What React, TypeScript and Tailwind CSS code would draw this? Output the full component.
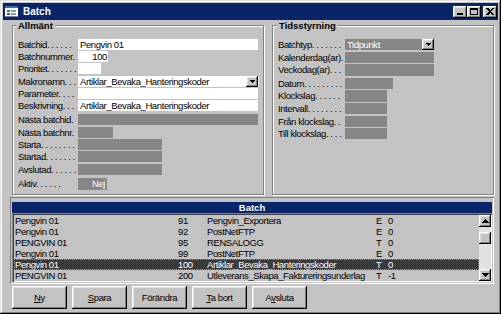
import React from "react";

const raised =
  "shadow-[inset_-1px_-1px_0_#000,inset_1px_1px_0_#fff,inset_-2px_-2px_0_#808080,inset_2px_2px_0_#dfdfdf]";

function Tri({ up = false }: { up?: boolean }) {
  return (
    <svg width="7" height="4" viewBox="0 0 7 4" shapeRendering="crispEdges" className="block">
      {up ? (
        <>
          <rect x="3" y="0" width="1" height="1" fill="#000" />
          <rect x="2" y="1" width="3" height="1" fill="#000" />
          <rect x="1" y="2" width="5" height="1" fill="#000" />
          <rect x="0" y="3" width="7" height="1" fill="#000" />
        </>
      ) : (
        <>
          <rect x="0" y="0" width="7" height="1" fill="#000" />
          <rect x="1" y="1" width="5" height="1" fill="#000" />
          <rect x="2" y="2" width="3" height="1" fill="#000" />
          <rect x="3" y="3" width="1" height="1" fill="#000" />
        </>
      )}
    </svg>
  );
}

function DropBtn() {
  return (
    <div className={`w-[12px] h-[11px] shrink-0 bg-[#c3c3c3] ${raised} flex items-center justify-center`}>
      <svg width="5" height="3" viewBox="0 0 5 3" shapeRendering="crispEdges" className="block">
        <rect x="0" y="0" width="5" height="1" fill="#000" />
        <rect x="1" y="1" width="3" height="1" fill="#000" />
        <rect x="2" y="2" width="1" height="1" fill="#000" />
      </svg>
    </div>
  );
}

function Row({ h, lw, label, children }: { h: string; lw: string; label: string; children?: React.ReactNode }) {
  return (
    <div className={`flex items-start ${h}`}>
      <div className={`${lw} h-[11px] whitespace-nowrap overflow-hidden shrink-0`}>{label}</div>
      {children}
    </div>
  );
}

function TitleBar() {
  return (
    <div className="h-[17px] bg-[#0a246a] flex items-center pl-[2px] pr-[1px] shrink-0">
      <svg width="13" height="11" viewBox="0 0 13 11" shapeRendering="crispEdges" className="block">
        <rect x="0" y="0" width="13" height="11" fill="#fff" />
        <rect x="0" y="0" width="13" height="2" fill="#3a6ea5" />
        <rect x="2" y="4" width="3" height="2" fill="#3a6ea5" />
        <rect x="6" y="4" width="5" height="2" fill="#7f9db9" />
        <rect x="2" y="7" width="3" height="2" fill="#3a6ea5" />
        <rect x="6" y="7" width="5" height="2" fill="#7f9db9" />
        <rect x="0" y="10" width="13" height="1" fill="#808080" />
      </svg>
      <span className="ml-[5px] text-white font-bold tracking-normal text-[10px] leading-[12px]">Batch</span>
      <div className="ml-auto flex items-center">
        <div className={`w-[14px] h-[12px] bg-[#c3c3c3] ${raised} relative`}>
          <div className="absolute left-[4px] top-[7px] w-[6px] h-[2px] bg-black" />
        </div>
        <div className={`w-[14px] h-[12px] bg-[#c3c3c3] ${raised} relative`}>
          <div className="absolute left-[3px] top-[2px] w-[8px] h-[7px] border border-black border-t-2" />
        </div>
        <div className={`ml-[2px] w-[14px] h-[12px] bg-[#c3c3c3] ${raised} flex items-center justify-center`}>
          <svg width="8" height="7" viewBox="0 0 8 7" shapeRendering="crispEdges" className="block">
            <path d="M0 0h2l2 2 2-2h2L5 3.5 8 7H6L4 5 2 7H0l3-3.5z" fill="#000" />
          </svg>
        </div>
      </div>
    </div>
  );
}

const ListRows = [
  ["Pengvin 01", "91", "Pengvin_Exportera", "E", "0"],
  ["Pengvin 01", "92", "PostNetFTP", "E", "0"],
  ["PENGVIN 01", "95", "RENSALOGG", "T", "0"],
  ["Pengvin 01", "99", "PostNetFTP", "E", "0"],
  ["Pengvin 01", "100", "Artiklar_Bevaka_Hanteringskoder", "T", "0"],
  ["PENGVIN 01", "200", "Utleverans_Skapa_Faktureringsunderlag", "T", "-1"],
];

export default function App() {
  const white = "bg-white h-[11px] px-[2px] whitespace-nowrap overflow-hidden";
  const gray = "bg-[#868686] h-[11px]";
  return (
    <div className="w-[501px] h-[314px] bg-[#c3c3c3] p-[3px] flex flex-col font-['Liberation_Sans',Arial,sans-serif] text-[9.5px] tracking-[-0.4px] leading-[11px] text-black shadow-[inset_-1px_-1px_0_#000,inset_1px_1px_0_#dfdfdf,inset_-2px_-2px_0_#808080,inset_2px_2px_0_#fff] overflow-hidden">
      <TitleBar />
      <div className="flex-1 flex flex-col pl-[7px]">
        <div className="flex mt-[5px] ml-[2px] gap-[8px]">
          {/* Allmänt */}
          <div className="relative w-[252px] h-[170px] border border-[#808080] shadow-[inset_1px_1px_0_#fff,1px_1px_0_#fff] pt-[13px] pl-[5px]">
            <div className="absolute -top-[6px] left-[3px] px-[2px] bg-[#c3c3c3] font-bold tracking-normal text-[9.5px] leading-[11px]">
              Allmänt
            </div>
            <Row h="h-[12px]" lw="w-[60px]" label="Batchid. . . . . .">
              <div className={`${white} w-[180px]`}>Pengvin 01</div>
            </Row>
            <Row h="h-[12px]" lw="w-[60px]" label="Batchnummer. .">
              <div className={`${white} w-[30px] text-right pr-[1px]`}>100</div>
            </Row>
            <Row h="h-[13px]" lw="w-[60px]" label="Prioritet. . . . . . .">
              <div className={`${white} w-[23px]`} />
            </Row>
            <Row h="h-[12px]" lw="w-[60px]" label="Makronamn. . .">
              <div className="bg-white h-[11px] w-[181px] flex items-center pl-[2px]">
                <span className="flex-1 whitespace-nowrap overflow-hidden">Artiklar_Bevaka_Hanteringskoder</span>
                <DropBtn />
                <div className="w-[1px]" />
              </div>
            </Row>
            <Row h="h-[12px]" lw="w-[60px]" label="Parameter. . . .">
              <div className={`${white} w-[180px]`} />
            </Row>
            <Row h="h-[14px]" lw="w-[60px]" label="Beskrivning. . .">
              <div className={`${white} w-[180px]`}>Artiklar_Bevaka_Hanteringskoder</div>
            </Row>
            <Row h="h-[13px]" lw="w-[60px]" label="Nästa batchid.">
              <div className={`${gray} w-[180px]`} />
            </Row>
            <Row h="h-[12px]" lw="w-[60px]" label="Nästa batchnr.">
              <div className={`${gray} w-[35px]`} />
            </Row>
            <Row h="h-[12px]" lw="w-[60px]" label="Starta. . . . . . . .">
              <div className={`${gray} w-[84px]`} />
            </Row>
            <Row h="h-[13px]" lw="w-[60px]" label="Startad. . . . . . .">
              <div className={`${gray} w-[84px]`} />
            </Row>
            <Row h="h-[14px]" lw="w-[60px]" label="Avslutad. . . . . .">
              <div className={`${gray} w-[84px]`} />
            </Row>
            <Row h="h-[12px]" lw="w-[60px]" label="Aktiv. . . . . .">
              <div className="bg-[#868686] h-[12px] w-[29px] text-white text-right pr-[2px] leading-[12px]">Nej</div>
            </Row>
          </div>

          {/* Tidsstyrning */}
          <div className="relative w-[222px] h-[170px] border border-[#808080] shadow-[inset_1px_1px_0_#fff,1px_1px_0_#fff] pt-[13px] pl-[5px]">
            <div className="absolute -top-[6px] left-[4px] px-[2px] bg-[#c3c3c3] font-bold tracking-normal text-[9.5px] leading-[11px]">
              Tidsstyrning
            </div>
            <Row h="h-[13px]" lw="w-[67px]" label="Batchtyp. . . . . . .">
              <div className="bg-[#868686] h-[11px] w-[89px] flex items-center pl-[2px] text-white">
                <span className="flex-1 whitespace-nowrap overflow-hidden">Tidpunkt</span>
                <DropBtn />
              </div>
            </Row>
            <Row h="h-[12px]" lw="w-[67px]" label="Kalenderdag(ar).">
              <div className={`${gray} w-[89px]`} />
            </Row>
            <Row h="h-[14px]" lw="w-[67px]" label="Veckodag(ar). . .">
              <div className={`${gray} w-[89px] h-[12px]`} />
            </Row>
            <Row h="h-[12px]" lw="w-[67px]" label="Datum. . . . . . . . .">
              <div className={`${gray} w-[48px]`} />
            </Row>
            <Row h="h-[13px]" lw="w-[67px]" label="Klockslag. . . . . .">
              <div className={`${gray} w-[42px] h-[12px]`} />
            </Row>
            <Row h="h-[13px]" lw="w-[67px]" label="Intervall. . . . . . . .">
              <div className={`${gray} w-[42px]`} />
            </Row>
            <Row h="h-[12px]" lw="w-[67px]" label="Från klockslag. .">
              <div className={`${gray} w-[42px]`} />
            </Row>
            <Row h="h-[12px]" lw="w-[67px]" label="Till klockslag. . . .">
              <div className={`${gray} w-[42px]`} />
            </Row>
          </div>
        </div>

        {/* List panel */}
        <div className="mt-[2px] w-[484px] h-[87px] shadow-[inset_1px_1px_0_#808080,inset_-1px_-1px_0_#fff] p-[2px] flex flex-col">
          <div className="mt-[3px] h-[11px] bg-[#0a246a] text-white font-bold tracking-normal text-center text-[9.5px] leading-[11px] shrink-0">
            Batch
          </div>
          <div className="flex-1 flex pt-[2px] pl-[2px] pb-[1px] shadow-[inset_1px_1px_0_#808080,inset_2px_2px_0_#404040,inset_-1px_-1px_0_#fff] overflow-hidden">
            <div className="flex-1 flex flex-col overflow-hidden">
              {ListRows.map((r, i) => (
                <div
                  key={i}
                  className={`flex h-[11px] shrink-0 whitespace-nowrap leading-[11px] ${
                    i === 4 ? "bg-[#3a3a3a] text-white outline outline-1 outline-dotted outline-[#9a9a9a] -outline-offset-1" : ""
                  }`}
                >
                  <div className="w-[164px] pl-[1px] shrink-0">{r[0]}</div>
                  <div className="w-[29px] shrink-0">{r[1]}</div>
                  <div className="w-[169px] shrink-0 overflow-hidden">{r[2]}</div>
                  <div className="w-[12px] shrink-0">{r[3]}</div>
                  <div className="flex-1">{r[4]}</div>
                </div>
              ))}
            </div>
            <div className="w-[12px] mr-[1px] flex flex-col bg-[#e2e2e2] shrink-0">
              <div className={`h-[12px] bg-[#c3c3c3] ${raised} flex items-center justify-center`}>
                <Tri up />
              </div>
              <div className={`mt-[5px] h-[12px] bg-[#c3c3c3] ${raised}`} />
              <div className="flex-1" />
              <div className={`h-[12px] bg-[#c3c3c3] ${raised} flex items-center justify-center`}>
                <Tri />
              </div>
            </div>
          </div>
        </div>

        {/* Buttons */}
        <div className="mt-[2px] ml-[2px] flex gap-[5px]">
          {[
            [<u key="u">N</u>, "y"],
            [<u key="u">S</u>, "para"],
            ["", "Förändra"],
            [<u key="u">T</u>, "a bort"],
            ["A", <u key="u">v</u>, "sluta"],
          ].map((parts, i) => (
            <div
              key={i}
              className={`w-[55px] h-[23px] bg-[#c3c3c3] ${raised} flex items-center justify-center whitespace-nowrap`}
            >
              <span>{parts}</span>
            </div>
          ))}
        </div>
      </div>
    </div>
  );
}
